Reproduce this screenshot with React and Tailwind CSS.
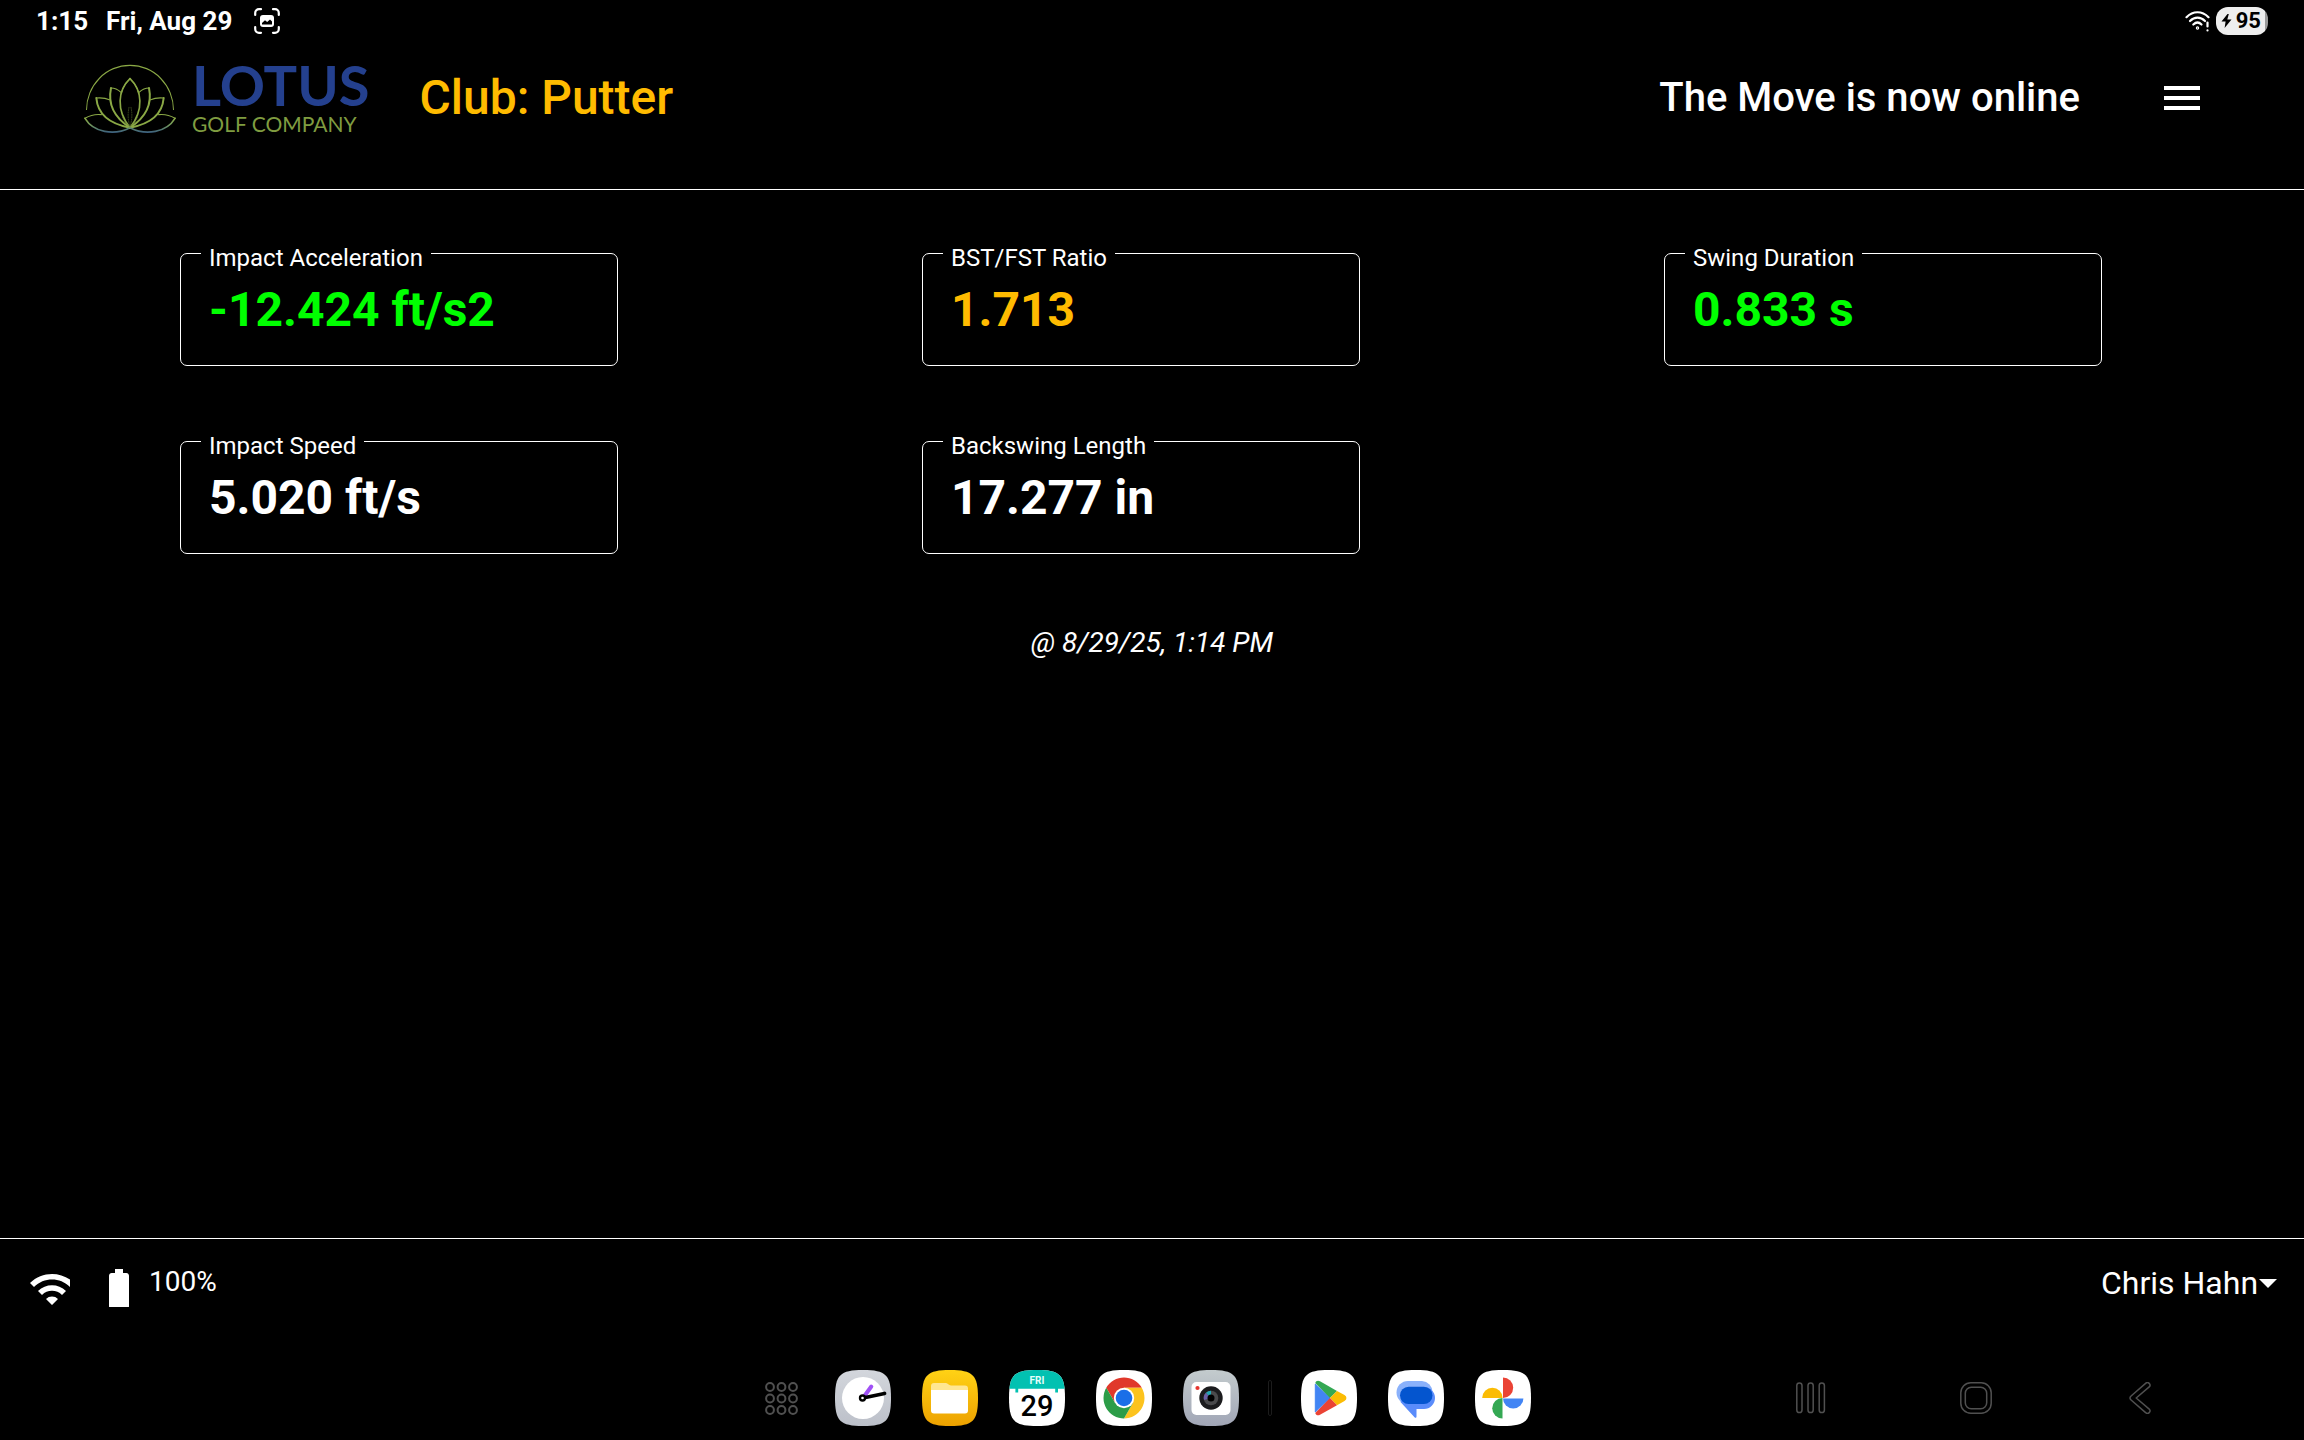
import React, { useState } from 'react';
import { MdMenu, MdWifi, MdBatteryFull } from 'react-icons/md';

const SQUIRCLE = 'M28 0C51 0 56 5 56 28S51 56 28 56 0 51 0 28 5 0 28 0Z';

const metrics = [
    { id: 'impact-acceleration', label: 'Impact Acceleration', value: '-12.424 ft/s2', color: 'text-[#00ff00]' },
    { id: 'ratio', label: 'BST/FST Ratio', value: '1.713', color: 'text-[#ffbb00]' },
    { id: 'swing-duration', label: 'Swing Duration', value: '0.833 s', color: 'text-[#00ff00]' },
    { id: 'impact-speed', label: 'Impact Speed', value: '5.020 ft/s', color: 'text-white' },
    { id: 'backswing-length', label: 'Backswing Length', value: '17.277 in', color: 'text-white' },
];

const StatusBar = () => (
    <div className="flex h-[42px] items-center justify-between pl-9 pr-9 text-[26px] leading-none font-bold">
        <div className="flex items-center gap-[18px]">
            <span>1:15</span>
            <span>Fri, Aug 29</span>
            <svg viewBox="0 0 26 26" className="ml-1 h-[26px] w-[26px]" fill="none">
                <path
                    d="M1.2 7V5A3.8 3.8 0 0 1 5 1.2H7M19 1.2H21A3.8 3.8 0 0 1 24.8 5V7M24.8 19V21A3.8 3.8 0 0 1 21 24.8H19M7 24.8H5A3.8 3.8 0 0 1 1.2 21V19"
                    stroke="#fff"
                    strokeWidth="2.2"
                    strokeLinecap="round"
                />
                <rect x="6" y="7" width="14" height="12" rx="3" fill="#fff" />
                <path d="M8 16.5V15L11 12.2L13.2 14L16 11.5L18 13.6V16.5Z" fill="#000" />
            </svg>
        </div>
        <div className="flex items-center gap-[6px]">
            <svg viewBox="0 0 25 21" className="h-[21px] w-[25px]" fill="none" stroke="#fff" strokeWidth="2.2" strokeLinecap="round">
                <path d="M1.5 6.2C8 -.4 17 -.4 23.5 6.2" />
                <path d="M5 10C9.5 5.6 15.5 5.6 20 10" />
                <path d="M8.3 13.5C11 11 14 11 16.5 13.5" />
                <circle cx="12.5" cy="17" r=".6" />
                <path d="M22.5 11.5V15.5M22.5 19.4V19.5" />
            </svg>
            <div className="flex h-7 items-center gap-1 rounded-[12px] bg-gradient-to-r from-[#eeeeee] from-95% to-[#9a9a9a] to-95% px-[5px] text-[22px] text-black">
                <svg viewBox="0 0 11 14" className="h-[14px] w-[11px]">
                    <path d="M6.5 0L.5 7.5H4.6L3.6 14L10.5 5.5H6.3L7.8 0Z" />
                </svg>
                <span className="pr-[2px]">95</span>
            </div>
        </div>
    </div>
);

const Petals = () => (
    <g fill="none" strokeLinecap="round" strokeLinejoin="round">
        <path d="M388 236C352 270 345 330 388 383" stroke="#8aa845" strokeWidth="5" />
        <path d="M388 236C402 250 411 264 415 282" stroke="#8aa845" strokeWidth="3" />
        <path d="M361 277C352 269 342 264 331 264" stroke="#8aa845" strokeWidth="3.5" />
        <path d="M331 264C321 312 340 352 388 383" stroke="#8aa845" strokeWidth="6" />
        <path d="M326 299C313 293 300 293 287 294" stroke="#8aa845" strokeWidth="3.5" />
        <path d="M287 294C291 342 328 372 388 383" stroke="#8aa845" strokeWidth="6" />
        <path d="M302 344C284 342 268 346 253 355" stroke="#8aa845" strokeWidth="3.5" />
        <path d="M253 355C278 397 340 408 388 383" stroke="url(#leaf)" strokeWidth="5" />
        <path d="M385 322C380 345 383 365 388 380" stroke="#6f8838" strokeWidth="1.5" strokeDasharray="3 4" />
        <path d="M366 352C372 364 379 374 388 381" stroke="#6f8838" strokeWidth="2" />
    </g>
);

const Logo = () => (
    <div className="flex items-center gap-4">
        <svg viewBox="250 186 276 216" className="h-[72px] w-[92px]">
            <defs>
                <linearGradient id="leaf" x1="0" y1="355" x2="0" y2="398" gradientUnits="userSpaceOnUse">
                    <stop offset="0" stopColor="#8aa845" />
                    <stop offset=".5" stopColor="#6f9560" />
                    <stop offset="1" stopColor="#3c6080" />
                </linearGradient>
            </defs>
            <path d="M256 330A132 136 0 1 1 520 330L517 330A129 132 0 1 0 259 330Z" fill="#8aa845" />
            <Petals />
            <g transform="translate(776 0) scale(-1 1)">
                <Petals />
            </g>
        </svg>
        <div className="flex flex-col justify-center font-['Lato',sans-serif]">
            <span className="text-[56px] leading-[52px] font-bold text-[#24408e]">LOTUS</span>
            <span className="text-[21px] leading-[26px] text-[#7f9c40]">GOLF COMPANY</span>
        </div>
    </div>
);

const Header = () => (
    <header className="border-b border-white pb-[35px]">
        <div className="flex h-28 items-center pl-[84px] pr-[98px]">
            <Logo />
            <h1 className="ml-[50px] text-[48px] leading-[56px] font-medium text-[#ffbb00]">Club: Putter</h1>
            <p className="ml-auto text-[40px] leading-[48px] font-medium">The Move is now online</p>
            <button type="button" aria-label="Menu" className="ml-[78px]">
                <MdMenu className="h-12 w-12" />
            </button>
        </div>
    </header>
);

const Metric = ({ id, label, value, color }) => (
    <fieldset className="h-[129px] min-w-0 rounded-[7px] border border-white px-5">
        <legend className="px-2 pt-[10px] text-[24px] leading-[22px]">
            <label htmlFor={id}>{label}</label>
        </legend>
        <input
            id={id}
            readOnly
            value={value}
            className={`mt-[13px] block h-[56px] w-full bg-transparent px-2 text-[48px] font-bold outline-none ${color}`}
        />
    </fieldset>
);

const Footer = () => {
    const [player, setPlayer] = useState('Chris Hahn');

    return (
        <footer className="flex h-[118px] items-start justify-between border-t border-white pt-[26px] pl-7 pr-[27px]">
            <div className="flex items-start">
                <div className="h-[42px] w-[42px] overflow-hidden">
                    <MdWifi className="h-12 w-12 max-w-none" />
                </div>
                <div className="ml-[25px] h-[42px] w-[42px] overflow-hidden">
                    <MdBatteryFull className="h-12 w-12 max-w-none" />
                </div>
                <span className="ml-3 text-[28px] leading-[34px]">100%</span>
            </div>
            <div className="flex items-center">
                <select
                    aria-label="Player"
                    value={player}
                    onChange={(e) => setPlayer(e.target.value)}
                    className="appearance-none bg-black text-[32px] leading-[36px] outline-none"
                >
                    <option>Chris Hahn</option>
                </select>
                <svg viewBox="0 0 18 9" className="h-[9px] w-[18px]" fill="#fff">
                    <path d="M0 0H18L9 9Z" />
                </svg>
            </div>
        </footer>
    );
};

const AppIcon = ({ name, fill = '#fff', children }) => (
    <button type="button" aria-label={name}>
        <svg viewBox="0 0 56 56" className="h-14 w-14">
            <path d={SQUIRCLE} fill={fill} />
            {children}
        </svg>
    </button>
);

const Dock = () => (
    <nav className="grid h-[84px] grid-cols-[1fr_auto_1fr] items-center">
        <svg className="h-0 w-0">
            <defs>
                <linearGradient id="clockBg" x1="0" y1="0" x2="0" y2="1">
                    <stop offset="0" stopColor="#d3d6dc" />
                    <stop offset="1" stopColor="#bcc0c9" />
                </linearGradient>
                <linearGradient id="folderBg" x1="0" y1="0" x2="0" y2="1">
                    <stop offset="0" stopColor="#ffd215" />
                    <stop offset="1" stopColor="#eda200" />
                </linearGradient>
                <linearGradient id="cameraBg" x1="0" y1="0" x2="0" y2="1">
                    <stop offset="0" stopColor="#c3cbcd" />
                    <stop offset="1" stopColor="#a1a6b6" />
                </linearGradient>
                <clipPath id="squircle">
                    <path d={SQUIRCLE} />
                </clipPath>
            </defs>
        </svg>
        <div className="flex items-center gap-[31px] pr-[9px]">
            <button type="button" aria-label="All apps" className="mr-[6px]">
                <svg viewBox="0 0 33 33" className="h-[33px] w-[33px]" fill="none" stroke="#505050" strokeWidth="2">
                    {[5, 16.5, 28].map((y) =>
                        [5, 16.5, 28].map((x) => <circle key={`${x}-${y}`} cx={x} cy={y} r="3.9" />)
                    )}
                </svg>
            </button>
            <AppIcon name="Clock" fill="url(#clockBg)">
                <circle cx="28" cy="28" r="21" fill="#fff" />
                <path d="M28 28L36.3 16.5" stroke="#a050f5" strokeWidth="4" strokeLinecap="round" />
                <path d="M28 28L49.5 23.5" stroke="#000" strokeWidth="3.8" strokeLinecap="round" />
                <circle cx="27.5" cy="28" r="3.7" fill="#000" />
                <circle cx="27.5" cy="28" r="1.3" fill="#fff" />
            </AppIcon>
            <AppIcon name="My Files" fill="url(#folderBg)">
                <path d="M9 16A3 3 0 0 1 12 13H24C26 13 26.5 15.5 29 15.5H43A3 3 0 0 1 46 18.5V30H9Z" fill="#ffe692" />
                <path d="M9 20H46V40.5A3 3 0 0 1 43 43.5H12A3 3 0 0 1 9 40.5Z" fill="#fff" />
            </AppIcon>
            <AppIcon name="Calendar">
                <path
                    clipPath="url(#squircle)"
                    d="M0 0H56V18.7H49V22.5H46.2V18.7H9.2V22.5H6.4V18.7H0Z"
                    fill="#02c1b1"
                />
                <text x="28" y="14" textAnchor="middle" fill="#e5fffb" className="text-[10px] font-bold">FRI</text>
                <text x="28" y="46" textAnchor="middle" fill="#000" className="text-[29px] font-medium">29</text>
            </AppIcon>
            <AppIcon name="Chrome">
                <path d="M10.25 17.75A20.5 20.5 0 0 1 45.75 17.75H28V28L19.12 33.12Z" fill="#e0382b" />
                <path d="M45.75 17.75A20.5 20.5 0 0 1 28 48.5L36.88 33.12L28 28V17.75Z" fill="#fcc31e" />
                <path d="M28 48.5A20.5 20.5 0 0 1 10.25 17.75L19.12 33.12L28 28L36.88 33.12Z" fill="#2c9d48" />
                <circle cx="28" cy="28" r="10.2" fill="#fff" />
                <circle cx="28" cy="28" r="8.3" fill="#1a6fe8" />
            </AppIcon>
            <AppIcon name="Camera" fill="url(#cameraBg)">
                <rect x="8.5" y="12" width="39" height="33" rx="5" fill="#fff" />
                <circle cx="14.5" cy="18" r="2.1" fill="#e5342f" />
                <circle cx="28" cy="28" r="11.7" fill="#1c1c1e" />
                <circle cx="28" cy="28" r="7.3" fill="#4a4a4c" />
                <path d="M28 28L21 30A7.3 7.3 0 0 1 23 22.7Z" fill="#6b5fa8" />
                <path d="M28 28L23 22.7A7.3 7.3 0 0 1 28 20.7Z" fill="#23a5b5" />
                <circle cx="28" cy="28" r="3.5" fill="#000" />
            </AppIcon>
            <div className="-mx-[2px] h-9 w-1 rounded-[2px] border border-[#1c1c1c]" />
            <AppIcon name="Play Store">
                <path d="M14.3 14V42L29 28Z" fill="#4285f4" stroke="#4285f4" />
                <path d="M14.3 13C14.8 10.8 17 10.2 19 11.3L36 20.9L29 28Z" fill="#34a853" />
                <path d="M36 20.9L43.5 25C46 26.5 46 29.5 43.5 31L36 35.2L29 28Z" fill="#fbbc04" />
                <path d="M14.3 43C14.8 45.3 17 45.9 19 44.8L36 35.2L29 28Z" fill="#ea4335" />
            </AppIcon>
            <AppIcon name="Messages">
                <path d="M20 11H34A11 11 0 0 1 44.5 22L20 34A11.5 11.5 0 0 1 20 11Z" fill="#8ab1fb" />
                <path d="M20 17H36A10.7 10.7 0 0 1 36 39H28.5V46.5C28.5 48 27.5 48.2 26.5 47.2L12.5 32Z" fill="#5a8cfb" />
                <rect x="12" y="16.8" width="32.5" height="17.2" rx="8.6" fill="#0455cf" />
            </AppIcon>
            <AppIcon name="Photos">
                <path d="M28 7.6A10.2 10.2 0 0 1 28 28Z" fill="#ea4335" />
                <path d="M48.4 28.4A10.2 10.2 0 0 1 28 28.4Z" fill="#4285f4" />
                <path d="M27.5 48.5A10.2 10.2 0 0 1 27.5 28Z" fill="#34a853" />
                <path d="M7.2 28A10.2 10.2 0 0 1 27.6 28Z" fill="#fbbc04" />
            </AppIcon>
        </div>
        <div className="flex justify-end gap-[133px] pr-[147px]">
            <button type="button" aria-label="Recent apps">
                <svg viewBox="0 0 32 32" className="h-8 w-8" fill="none" stroke="#505050" strokeWidth="1.5">
                    <rect x="1.8" y="1" width="5.2" height="29.5" rx="2.6" />
                    <rect x="13" y="1" width="5.2" height="29.5" rx="2.6" />
                    <rect x="24.2" y="1" width="5.2" height="29.5" rx="2.6" />
                </svg>
            </button>
            <button type="button" aria-label="Home">
                <svg viewBox="0 0 32 32" className="h-8 w-8" fill="none" stroke="#505050" strokeWidth="1.5">
                    <rect x=".8" y=".8" width="30.4" height="30.4" rx="10" />
                    <rect x="5.3" y="5.3" width="21.4" height="21.4" rx="6" />
                </svg>
            </button>
            <button type="button" aria-label="Back">
                <svg viewBox="0 0 32 32" className="h-8 w-8" fill="none" stroke="#505050" strokeWidth="1.5" strokeLinejoin="round">
                    <path d="M5.8 14.3L20.6 1.4A2.5 2.5 0 0 1 24.2 4.9L11.2 16L24.2 27.1A2.5 2.5 0 0 1 20.6 30.6L5.8 17.7A2.2 2.2 0 0 1 5.8 14.3Z" />
                </svg>
            </button>
        </div>
    </nav>
);

const App = () => (
    <div className="flex min-h-screen flex-col bg-black font-['Roboto',sans-serif] text-white">
        <StatusBar />
        <Header />
        <main className="flex-1 pt-[47px]">
            <div className="grid grid-cols-3 gap-x-[304px] gap-y-[59px] pl-[180px] pr-[202px]">
                {metrics.map((metric) => (
                    <Metric key={metric.id} {...metric} />
                ))}
            </div>
            <p className="mt-[72px] text-center text-[28px] leading-[34px] italic">@ 8/29/25, 1:14 PM</p>
        </main>
        <Footer />
        <Dock />
    </div>
);

export default App;
